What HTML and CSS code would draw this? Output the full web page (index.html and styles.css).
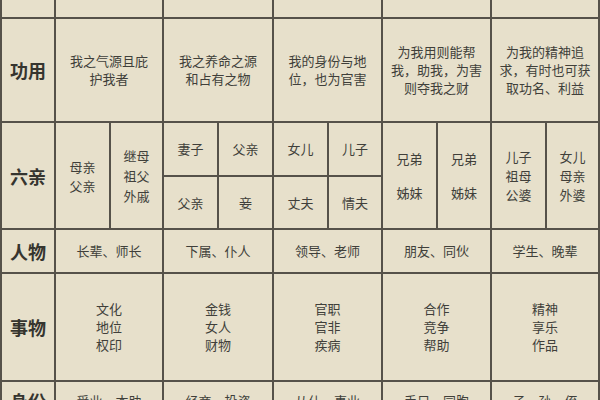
FILE: index.html
```html
<!DOCTYPE html>
<html lang="zh-CN">
<head>
<meta charset="utf-8">
<title>十神表</title>
<link rel="stylesheet" href="styles.css">
</head>
<body>
<div class="table">
  <div class="cell label"></div>
  <div class="cell span2"></div>
  <div class="cell span2"></div>
  <div class="cell span2"></div>
  <div class="cell span2"></div>
  <div class="cell span2"></div>

  <div class="cell label">功用</div>
  <div class="cell span2">我之气源且庇<br>护我者</div>
  <div class="cell span2">我之养命之源<br>和占有之物</div>
  <div class="cell span2">我的身份与地<br>位，也为官害</div>
  <div class="cell span2">为我用则能帮<br>我，助我，为害<br>则夺我之财</div>
  <div class="cell span2">为我的精神追<br>求，有时也可获<br>取功名、利益</div>

  <div class="cell label rows2">六亲</div>
  <div class="cell rows2 tight">母亲<br>父亲</div>
  <div class="cell rows2 tall">继母<br>祖父<br>外戚</div>
  <div class="cell">妻子</div>
  <div class="cell">父亲</div>
  <div class="cell">女儿</div>
  <div class="cell">儿子</div>
  <div class="cell rows2 pair">兄弟<br>姊妹</div>
  <div class="cell rows2 pair">兄弟<br>姊妹</div>
  <div class="cell rows2 tight">儿子<br>祖母<br>公婆</div>
  <div class="cell rows2 tight">女儿<br>母亲<br>外婆</div>
  <div class="cell">父亲</div>
  <div class="cell">妾</div>
  <div class="cell">丈夫</div>
  <div class="cell">情夫</div>

  <div class="cell label">人物</div>
  <div class="cell span2">长辈、师长</div>
  <div class="cell span2">下属、仆人</div>
  <div class="cell span2">领导、老师</div>
  <div class="cell span2">朋友、同伙</div>
  <div class="cell span2">学生、晚辈</div>

  <div class="cell label">事物</div>
  <div class="cell span2">文化<br>地位<br>权印</div>
  <div class="cell span2">金钱<br>女人<br>财物</div>
  <div class="cell span2">官职<br>官非<br>疾病</div>
  <div class="cell span2">合作<br>竞争<br>帮助</div>
  <div class="cell span2">精神<br>享乐<br>作品</div>

  <div class="cell label top">身份</div>
  <div class="cell span2 top">受业、本助</div>
  <div class="cell span2 top">经商、投资</div>
  <div class="cell span2 top">从仕、事业</div>
  <div class="cell span2 top">手足、同胞</div>
  <div class="cell span2 top">子、孙、侄</div>
</div>
</body>
</html>
```

FILE: styles.css
```css
html, body {
  margin: 0;
  padding: 0;
  background: #e7e0cb;
  overflow: hidden;
}

.table {
  display: grid;
  grid-template-columns: 52px 53px 51px 53px 53px 53px 52px 53px 52px 53px 51px;
  grid-template-rows: 17px 102px 52px 51px 42px 106px 40px;
  gap: 2px;
  padding: 0 2px;
  width: 600px;
  box-sizing: border-box;
  background: #56524a;
  font-family: "Noto Sans CJK SC", "Noto Sans", sans-serif;
  font-size: 13px;
  line-height: 18px;
  color: #403f3a;
}

.cell {
  background: #e7e0cb;
  display: flex;
  align-items: center;
  justify-content: center;
  text-align: center;
}

.span2 {
  grid-column: span 2;
}

.rows2 {
  grid-row: span 2;
}

.label {
  font-size: 18px;
  font-weight: 700;
  color: #36352f;
}

.tight {
  line-height: 19px;
}

.tall {
  line-height: 20px;
}

.pair {
  line-height: 34px;
}

.top {
  align-items: flex-start;
  padding-top: 10px;
}
```
